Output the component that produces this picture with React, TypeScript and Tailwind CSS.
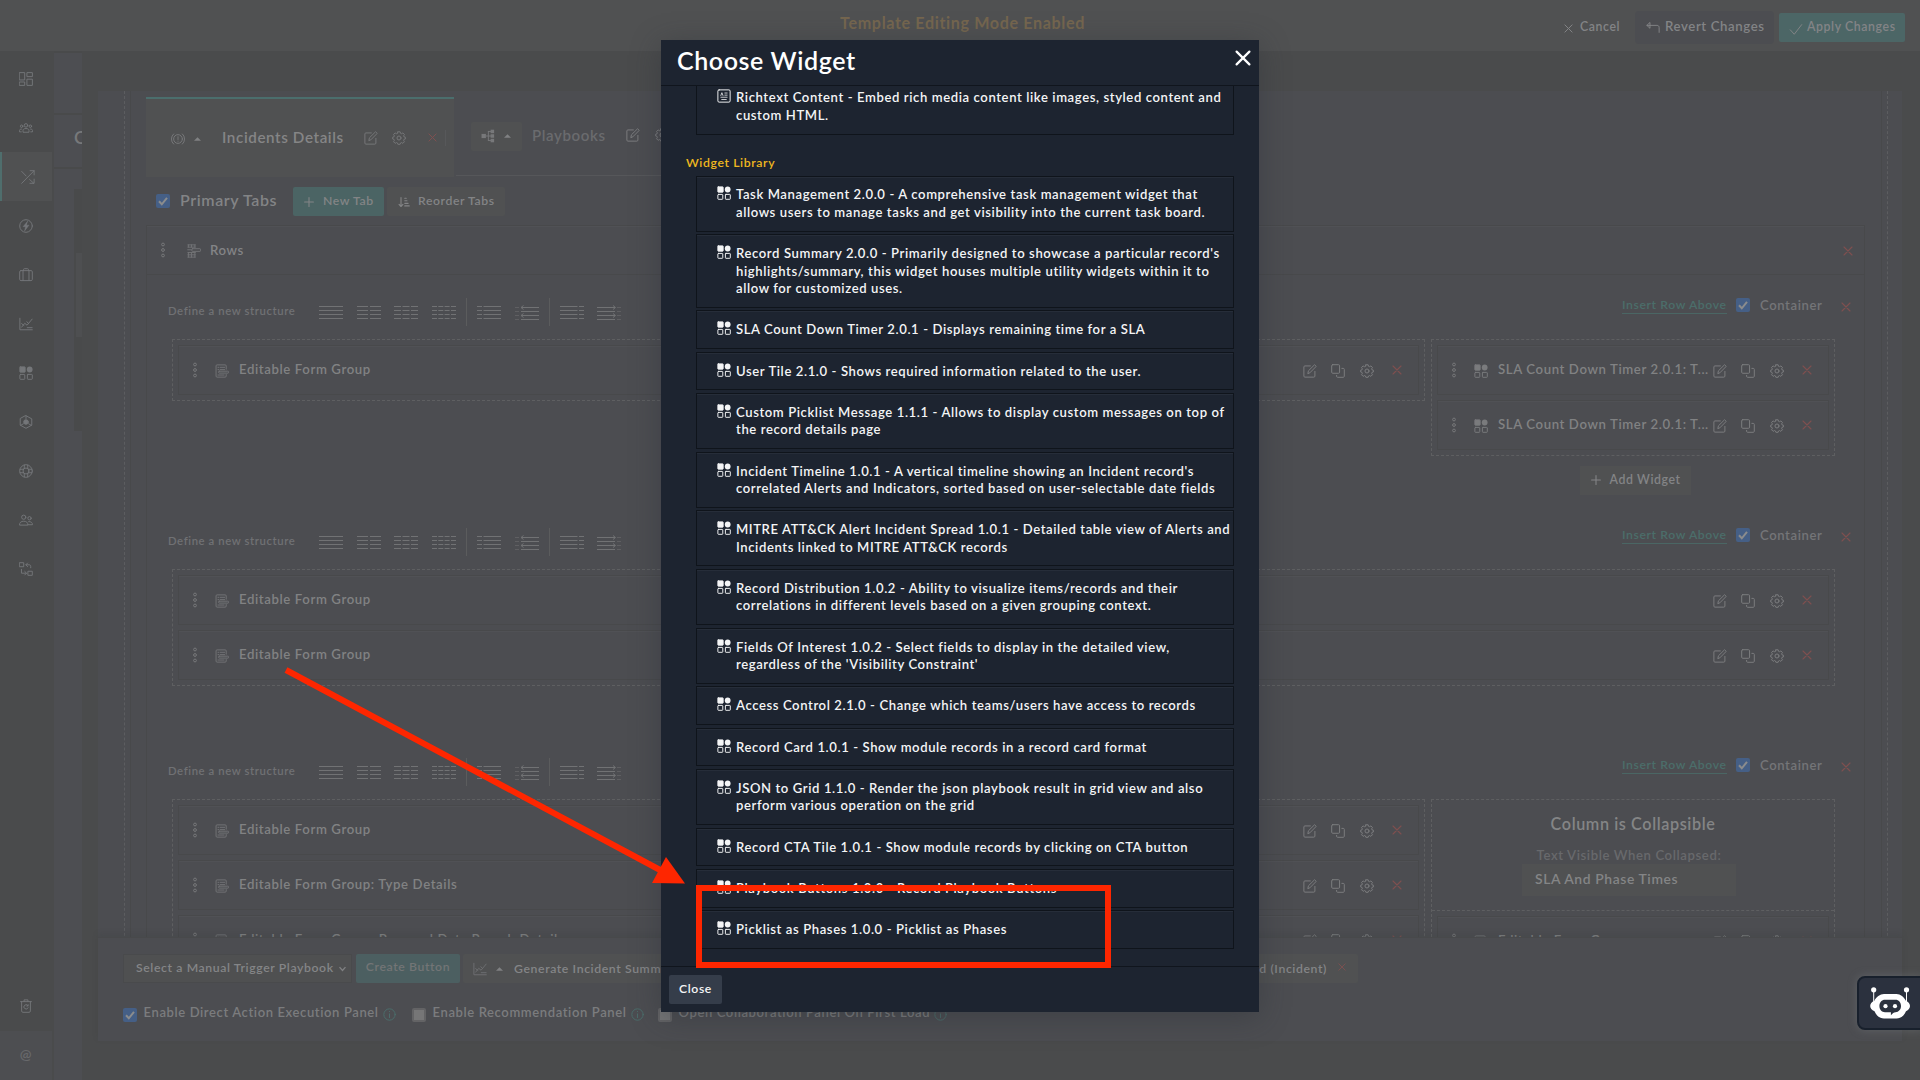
import React from 'react';
import type { ReactNode } from 'react';

type IconProps = { className?: string };

/* ---------- icons ---------- */

function Svg({ className = '', children, box = 16 }: { className?: string; children: ReactNode; box?: number }) {
  return (
    <svg
      viewBox={`0 0 ${box} ${box}`}
      className={`shrink-0 ${className}`}
      fill="none"
      stroke="currentColor"
      strokeWidth={1.1}
      strokeLinecap="round"
      strokeLinejoin="round"
    >
      {children}
    </svg>
  );
}

const WidgetIcon = ({ className }: IconProps) => (
  <Svg className={className}>
    <rect x="1" y="1" width="6" height="6" rx=".4" fill="currentColor" />
    <circle cx="12.2" cy="4" r="3.3" fill="currentColor" stroke="none" />
    <rect x="1" y="9.6" width="5.6" height="5.6" rx=".6" />
    <rect x="9.6" y="9.6" width="5.6" height="5.6" rx=".6" />
  </Svg>
);
const DashboardIcon = ({ className }: IconProps) => (
  <Svg className={className}>
    <rect x=".7" y=".7" width="5.8" height="8.4" />
    <rect x="9.5" y=".7" width="5.8" height="4.6" />
    <rect x=".7" y="11.4" width="5.8" height="3.9" />
    <rect x="9.5" y="8.2" width="5.8" height="7.1" />
  </Svg>
);
const TeamIcon = ({ className }: IconProps) => (
  <Svg className={className}>
    <circle cx="8" cy="5" r="2" />
    <path d="M4.6 12.4v-1.6c0-1.4 1.2-2.2 3.4-2.2s3.4.8 3.4 2.2v1.6z" />
    <circle cx="3" cy="6" r="1.4" />
    <circle cx="13" cy="6" r="1.4" />
    <path d="M2.6 12.4H.6v-1.6c0-1 .8-1.6 2.2-1.6M13.4 12.4h2v-1.6c0-1-.8-1.6-2.2-1.6" />
  </Svg>
);
const ShuffleIcon = ({ className }: IconProps) => (
  <Svg className={className}>
    <path d="M.8 15.2 15 .8M10.4.8H15v4.8M.8 1.6l5 5.2M9.8 10.8l4.8 4.4M15 10.4v4.8h-4.8" />
  </Svg>
);
const BoltIcon = ({ className }: IconProps) => (
  <Svg className={className}>
    <circle cx="8" cy="8" r="7.2" />
    <path d="M9.8 2.6 4.6 8.8h2.8l-1 4.8 5-6.6H8.6z" fill="currentColor" strokeWidth={0.5} />
  </Svg>
);
const CaseIcon = ({ className }: IconProps) => (
  <Svg className={className}>
    <rect x=".8" y="3" width="14.4" height="11.4" rx="1.4" />
    <path d="M5.2 3V1.8C5.2 1 5.6.8 6.2.8h3.6c.6 0 1 .2 1 1V3M4.6 3v11.4M11.4 3v11.4" />
  </Svg>
);
const ChartIcon = ({ className }: IconProps) => (
  <Svg className={className}>
    <path d="M1 1.4V14.6h14.2M3 11.6l3.6-4.4 2.6 2.2 5.8-7M3 7.6l2.6 2M9 5.4l1.6 1.8M9.4 12.2h5.6" />
  </Svg>
);
const HexIcon = ({ className }: IconProps) => (
  <Svg className={className}>
    <path d="M8 .8l6.6 3.6v7.2L8 15.2l-6.6-3.6V4.4zM8 4V1M5 10l-3 1.8M11 10l3 1.8" />
    <circle cx="8" cy="8" r="2.6" fill="currentColor" />
  </Svg>
);
const WheelIcon = ({ className }: IconProps) => (
  <Svg className={className}>
    <circle cx="8" cy="8" r="7.2" />
    <circle cx="8" cy="8" r="3.4" />
    <path d="M6 1.2v4M10 1.2v4M6 10.8v4M10 10.8v4M1.2 6h4M1.2 10h4M10.8 6h4M10.8 10h4" />
  </Svg>
);
const PeopleIcon = ({ className }: IconProps) => (
  <Svg className={className}>
    <circle cx="5.4" cy="4.8" r="2.4" />
    <circle cx="12" cy="6" r="1.9" />
    <path d="M.6 13.4c0-2.6 1.8-4 4.8-4s4.8 1.4 4.8 4zM11 9.8c2.8-.2 4.4 1.2 4.4 3.6h-5" />
  </Svg>
);
const FlowIcon = ({ className }: IconProps) => (
  <Svg className={className}>
    <rect x=".8" y=".8" width="4.6" height="4.6" />
    <rect x="10.6" y="10.6" width="4.6" height="4.6" />
    <path d="M8 3.2h3.4c1.4 0 2 .6 2 2v1.4M9.8 1.2 7.8 3.2l2 2M2.8 8.4v4.4h5.6M6.6 10.8l2 2-2 2" />
  </Svg>
);
const TrashIcon = ({ className }: IconProps) => (
  <Svg className={className}>
    <path d="M1.8 3h12.4M5.8 3V1h4.4v2M3 3v10.6c0 1 .5 1.6 1.4 1.6h7.2c.9 0 1.4-.6 1.4-1.6V3M10.2 7.6A2.5 2.5 0 1 0 10.4 10M10.4 6.4v1.6H8.8" />
  </Svg>
);
const EditIcon = ({ className }: IconProps) => (
  <Svg className={className}>
    <path d="M8.4 2.2H2.2c-.8 0-1.2.4-1.2 1.2v10.4c0 .8.4 1.2 1.2 1.2h10.2c.8 0 1.2-.4 1.2-1.2V8.4" />
    <path d="M5.6 10.6l.6-2.8L13.2.9l1.9 1.8-7 7.1z" />
  </Svg>
);
const CopyIcon = ({ className }: IconProps) => (
  <Svg className={className}>
    <rect x=".8" y=".8" width="9" height="9.8" rx="1.2" />
    <path d="M12.4 5h1.6c.8 0 1.2.4 1.2 1.2V14c0 .8-.4 1.2-1.2 1.2H7.6c-.8 0-1.2-.4-1.2-1.2v-1" />
  </Svg>
);
const GearIcon = ({ className }: IconProps) => (
  <Svg className={className}>
    <path d="M6.7.9h2.6l.4 1.7 1.2.5 1.5-.9 1.8 1.8-.9 1.5.5 1.2 1.5.4v2l-1.5.4-.5 1.2.9 1.6-1.8 1.8-1.6-.9-1.1.5-.4 1.5H6.7l-.4-1.5-1.2-.5-1.5.9-1.8-1.8.9-1.6-.5-1.2L.8 9.1v-2l1.4-.4.5-1.2L1.8 4l1.8-1.8 1.5.9 1.2-.5z" />
    <circle cx="8" cy="8" r="2.3" />
  </Svg>
);
const CrossIcon = ({ className }: IconProps) => (
  <Svg className={className} box={10}>
    <path d="M1 1l8 8M9 1L1 9" />
  </Svg>
);
const PlusIcon = ({ className }: IconProps) => (
  <Svg className={className} box={10}>
    <path d="M5 .6v8.8M.6 5h8.8" />
  </Svg>
);
const FormIcon = ({ className }: IconProps) => (
  <Svg className={className}>
    <path d="M12.8 6V2.2c0-.8-.4-1.2-1.2-1.2H2.4C1.6 1 1.2 1.4 1.2 2.2v11.6c0 .8.4 1.2 1.2 1.2h9.2c.8 0 1.2-.4 1.2-1.2V12M3.4 3.8h1M6 3.8h5M3.4 6.4h1M6 6.4h5M3.4 12.6h7" />
    <rect x="4.2" y="8.2" width="11.2" height="2.2" rx=".6" />
  </Svg>
);
const RowsIcon = ({ className }: IconProps) => (
  <Svg className={className}>
    <path d="M1 1h8.5M1 3.6h8.5M1.6 1v2.6M5.2 1v2.6M9 1v2.6M1 9.8h8.5M1 12.4h8.5M1 15h8.5M1.6 9.8V15M5.2 9.8V15M9 9.8V15M.8 6.6h4" />
    <rect x="5.6" y="5.4" width="9.8" height="3" rx=".6" />
  </Svg>
);
const RichtextIcon = ({ className }: IconProps) => (
  <Svg className={className}>
    <rect x="1" y="1" width="14" height="14" rx="1.4" />
    <path d="M4.4 7.4l1.2-3.2 1.2 3.2M9 4.6h2.6M9 7h2.6M4.4 9.4h7.2M5.4 12h5.2" strokeWidth={0.9} />
  </Svg>
);
const AlertIcon = ({ className }: IconProps) => (
  <Svg className={className}>
    <circle cx="8" cy="8" r="5" />
    <path d="M8 5.4v3.2M8 10.4v.2M3 2.2a7.6 7.6 0 0 0 0 11.6M13 2.2a7.6 7.6 0 0 1 0 11.6" />
  </Svg>
);
const TreeIcon = ({ className }: IconProps) => (
  <Svg className={className}>
    <rect x=".6" y="5.6" width="5" height="4.8" fill="currentColor" stroke="none" />
    <rect x="11" y=".8" width="4" height="4" fill="currentColor" stroke="none" />
    <rect x="11" y="6" width="4" height="4" fill="currentColor" stroke="none" />
    <rect x="11" y="11.2" width="4" height="4" fill="currentColor" stroke="none" />
    <path d="M5.6 8H11M8.4 2.8v10.4M8.4 2.8H11M8.4 13.2H11" />
  </Svg>
);
const SortIcon = ({ className }: IconProps) => (
  <Svg className={className}>
    <path d="M4 2v12M1.4 11.2 4 14l2.6-2.8M9 3h2M9 6.4h3M9 9.8h4.5M9 13.2h6" strokeWidth={1.5} />
  </Svg>
);
const RevertIcon = ({ className }: IconProps) => (
  <Svg className={className}>
    <path d="M4.2 2 1 5l3.2 3zM1 5h11.5c1.6 0 2.5.9 2.5 2.5v5.5" />
  </Svg>
);
const CheckIcon = ({ className }: IconProps) => (
  <Svg className={className}>
    <path d="M1.5 9l4.5 5L14.5 3" />
  </Svg>
);
const InfoIcon = ({ className }: IconProps) => (
  <Svg className={className}>
    <circle cx="8" cy="8" r="7" />
    <path d="M8 7.2v4.6M8 4.2v.3" />
  </Svg>
);
const Caret = () => (
  <svg viewBox="0 0 8 4" className="h-1 w-[7px] shrink-0 fill-[#808183]">
    <path d="M0 4 4 0l4 4z" />
  </svg>
);
const Dots = () => (
  <svg viewBox="0 0 6 16" className="h-4 w-1.5 shrink-0 fill-none stroke-[#77787a]">
    <circle cx="3" cy="2.5" r="1.4" />
    <circle cx="3" cy="8" r="1.4" />
    <circle cx="3" cy="13.5" r="1.4" />
  </svg>
);

/* ---------- small controls ---------- */

function Checkbox({ on = true }: { on?: boolean }) {
  return on ? (
    <span className="flex size-3.5 shrink-0 items-center justify-center rounded-xs bg-[#455f86]">
      <svg viewBox="0 0 12 12" className="size-3 fill-none stroke-[#8b8c8d] stroke-2">
        <path d="M2 6.3l2.8 3L10 2.8" />
      </svg>
    </span>
  ) : (
    <span className="block size-3.5 shrink-0 rounded-xs border-2 border-[#636365] bg-[#767677]" />
  );
}

const structures: { lines: string[]; arrow?: 'l' | 'r'; gap: string }[] = [
  { lines: ['M0 0H24'], gap: 'ml-0' },
  { lines: ['M0 0H11M13 0H24'], gap: 'ml-3.5' },
  { lines: ['M0 0H7M8.5 0H15.5M17 0H24'], gap: 'ml-[13px]' },
  { lines: ['M0 0H5M6.3 0H11.3M12.6 0H17.6M19 0H24'], gap: 'ml-3.5' },
  { lines: ['M0 0H5M6.5 0H24'], gap: 'ml-2.5' },
  { lines: ['M6 0H24', 'M0 0H4'], arrow: 'l', gap: 'ml-3.5' },
  { lines: ['M0 0H17.5M19 0H24'], gap: 'ml-2.5' },
  { lines: ['M0 0H18', 'M20 0H24'], arrow: 'r', gap: 'ml-[13px]' },
];

function StructureBar() {
  return (
    <div className="flex items-center pt-2.5">
      <span className="mb-px w-[151px] whitespace-nowrap text-[11.3px] text-[#707174]">Define a new structure</span>
      {structures.map((s, i) => (
        <React.Fragment key={i}>
          {(i === 4 || i === 6) && <span className="ml-2.5 h-7 w-px bg-[#5b5c5d]" />}
          <svg viewBox="0 0 24 16" className={`mt-0.5 h-4 w-6 shrink-0 fill-none stroke-[#717274] ${s.gap}`}>
            {[1.5, 5.5, 9.5, 13.5].map((y) => (
              <g key={y} transform={`translate(0 ${s.arrow ? y + 1 : y})`}>
                <path d={s.lines[0]} />
                {s.lines[1] && <path d={s.lines[1]} strokeOpacity=".5" />}
              </g>
            ))}
            {s.arrow === 'l' && <path d="M8.5 .5 6 2.5l2.5 2M8.5 8.5 6 10.5l2.5 2" />}
            {s.arrow === 'r' && <path d="M16 .5l2.5 2-2.5 2M16 8.5l2.5 2-2.5 2" />}
          </svg>
        </React.Fragment>
      ))}
    </div>
  );
}

function Card({ label, widget = false }: { label: string; widget?: boolean }) {
  return (
    <div className="flex h-[49.5px] shrink-0 items-center border border-[#48494b] pl-[12.5px] pr-1.5 shadow-[inset_0_1px_0_#505155]">
      <Dots />
      <span className="ml-[17.5px] text-[#737477]">
        {widget ? <WidgetIcon className="mt-0.5 size-3.5 text-[#7a7b7d]" /> : <FormIcon className="mt-0.5 size-3.5" />}
      </span>
      <span className="ml-2.5 min-w-0 whitespace-nowrap text-[13.2px] text-[#818283]">{label}</span>
      <span className="ml-auto flex shrink-0 items-center pt-0.5 text-[#7d7e80]">
        <span className="flex w-[28.5px] justify-center"><EditIcon className="size-3.5" /></span>
        <span className="flex w-[28.5px] justify-center"><CopyIcon className="size-3.5" /></span>
        <span className="flex w-[28.5px] justify-center"><GearIcon className="size-3.5" /></span>
        <span className="mb-0.5 flex w-[31px] justify-center"><CrossIcon className="size-2.5 text-[#7f5050]" /></span>
      </span>
    </div>
  );
}

function Section({ children }: { children: ReactNode }) {
  return (
    <div className="flex h-[230px] shrink-0 flex-col">
      <div className="flex h-16 shrink-0 items-center pl-[21px] pr-[13px]">
        <StructureBar />
        <div className="ml-auto flex items-center pb-[3px]">
          <span className="mr-[9px] w-[105px] whitespace-nowrap border-b border-[#4a6664] text-[12.2px] leading-4 text-[#4b6d6a]">
            Insert Row Above
          </span>
          <Checkbox />
          <span className="ml-2.5 w-[81px] text-[13.1px] text-[#747578]">Container</span>
          <CrossIcon className="mt-1 size-2.5 text-[#7f5050]" />
        </div>
      </div>
      <div className="flex items-start gap-1.5 pl-[25px] pr-[29px]">{children}</div>
    </div>
  );
}

const dropzone = 'flex flex-col gap-[5.5px] border border-dashed border-[#5e5f61] p-[5px]';

/* ---------- page behind the dialog ---------- */

const sideIcons = [DashboardIcon, TeamIcon, ShuffleIcon, BoltIcon, CaseIcon, ChartIcon, WidgetIcon, HexIcon, WheelIcon, PeopleIcon, FlowIcon];

function Sidebar() {
  return (
    <aside className="flex w-[54px] shrink-0 flex-col bg-[#4a4b4c] pt-[3px] text-[#747679]">
      {sideIcons.map((Icon, i) => (
        <div
          key={i}
          className={
            i === 2
              ? 'flex h-[49px] w-[52px] items-center justify-center border-l-2 border-[#4f6e6d] bg-[#505152] pl-0.5'
              : 'flex h-[49px] w-[52px] items-center justify-center'
          }
        >
          <Icon className="size-3.5" />
        </div>
      ))}
      <div className="mt-auto flex h-[49px] w-[52px] items-center justify-center pb-0.5"><TrashIcon className="size-3.5" /></div>
      <div className="flex h-[49px] w-[52px] items-center justify-center bg-[#4d4e51] pb-1 text-sm text-[#68696b]">@</div>
    </aside>
  );
}

function RecordColumn() {
  return (
    <div className="flex w-7 shrink-0 flex-col gap-0.5 overflow-hidden bg-[#494a4b] pt-0.5">
      <div className="h-[60px] bg-[#4d4e52]" />
      <div className="h-[52px] bg-[#4d4e52] pl-5 pt-2 text-lg text-[#77787a]">C</div>
      <div className="flex flex-1 justify-end bg-[#4d4e52] pt-5">
        <div className="h-[242px] w-2 bg-[#494a4b] pl-0.5 pt-16">
          <div className="h-[84px] bg-[#4e4f51]" />
        </div>
      </div>
    </div>
  );
}

function TopBar() {
  return (
    <header className="flex h-[51px] shrink-0 items-center justify-end bg-[#505152] pb-[7px] pr-[15px] text-[12.3px] text-[#838486]">
      <span className="mr-[479px] mt-[3px] whitespace-nowrap text-[16.2px] font-bold text-[#75664f]">Template Editing Mode Enabled</span>
      <CrossIcon className="mr-[7px] mt-[13px] size-[9px]" />
      <span className="mt-[11px] w-[55px]">Cancel</span>
      <span className="mt-[11px] flex h-[33px] w-[139px] items-center rounded-sm bg-[#4c4d51] pb-px pl-[11px] text-[13.2px]">
        <RevertIcon className="mr-[5px] mt-0.5 size-3.5" />
        <span className="whitespace-nowrap">Revert Changes</span>
      </span>
      <span className="ml-[5px] mt-[11px] flex h-[29px] w-[126px] items-center rounded-xs bg-[#4c6666] pl-2.5">
        <CheckIcon className="mr-1 mt-0.5 size-3.5" />
        <span className="whitespace-nowrap">Apply Changes</span>
      </span>
    </header>
  );
}

function TabStrip() {
  return (
    <div className="flex h-20 shrink-0">
      <div className="flex w-[308px] items-center border-t-2 border-[#4b6e6d] bg-[#505152] pb-px pl-[25px] text-[#77787a]">
        <AlertIcon className="mt-0.5 size-3.5" />
        <span className="ml-[9px] mr-[21px] mt-0.5"><Caret /></span>
        <span className="w-[142px] whitespace-nowrap text-[15.2px] text-[#858586]">Incidents Details</span>
        <EditIcon className="size-3.5" />
        <GearIcon className="ml-3.5 size-3.5" />
        <CrossIcon className="ml-[22px] size-[9px] text-[#7f5050]" />
        <span className="ml-2 h-4 w-px bg-[#57585a]" />
      </div>
      <div className="ml-0.5 flex h-[79px] w-[780px] items-center border-b border-[#56575a] pl-[15px]">
        <span className="flex h-[29px] w-[51px] items-center rounded-xs bg-[#505152] pl-2.5 text-[#77787a]">
          <TreeIcon className="mr-[9px] size-3.5" />
          <Caret />
        </span>
        <span className="mb-0.5 ml-2.5 w-[94px] text-[15.1px] text-[#6a6b6e]">Playbooks</span>
        <EditIcon className="mb-0.5 size-3.5 text-[#7d7e80]" />
        <GearIcon className="mb-0.5 ml-[15px] size-3.5 text-[#7d7e80]" />
      </div>
    </div>
  );
}

function Toolbar() {
  return (
    <div className="flex h-12 shrink-0 items-center pl-2.5 text-[12.2px] text-[#838486]">
      <Checkbox />
      <span className="mb-[3px] ml-2.5 w-[113px] whitespace-nowrap text-base leading-none">Primary Tabs</span>
      <span className="flex h-[29px] w-[91px] items-center rounded-xs bg-[#4b6464] pl-[11px]">
        <PlusIcon className="mr-[9px] mt-px size-2.5" />
        <span className="whitespace-nowrap">New Tab</span>
      </span>
      <span className="ml-[3px] flex h-[29px] w-[118px] items-center rounded-xs bg-[#505152] pl-[11px]">
        <SortIcon className="mr-2 mt-px size-3" />
        <span className="whitespace-nowrap">Reorder Tabs</span>
      </span>
    </div>
  );
}

function Canvas() {
  return (
    <div className="h-[846px] shrink-0 overflow-hidden bg-[#4c4d51] pl-[26px]">
      <div className="w-[1764px] border-x border-dashed border-[#5c5d60] px-[5px]">
        <div className="flex h-[900px] w-[1752px] flex-col border-x border-[#48494b] pl-[15px] pr-4 pt-1.5">
          <TabStrip />
          <Toolbar />
          <div className="flex flex-1 flex-col border border-b-0 border-[#48494b] shadow-[inset_0_1px_0_#505155]">
            <div className="flex h-[49px] shrink-0 items-center border-b border-[#48494b] pl-[13px] pr-[11px]">
              <Dots />
              <RowsIcon className="ml-[21px] mt-0.5 size-3.5 text-[#737477]" />
              <span className="ml-[9px] mt-px text-[13.2px] text-[#838486]">Rows</span>
              <CrossIcon className="ml-auto mt-0.5 size-2.5 text-[#7f5050]" />
            </div>
            <Section>
              <div className={`${dropzone} w-[1253px] shrink-0`}><Card label="Editable Form Group" /></div>
              <div className="flex min-w-0 flex-1 flex-col items-center">
                <div className={`${dropzone} w-full`}>
                  <Card widget label="SLA Count Down Timer 2.0.1: T..." />
                  <Card widget label="SLA Count Down Timer 2.0.1: T..." />
                </div>
                <span className="ml-1 mt-2.5 flex h-[29px] w-[111px] items-center bg-[#505152] pl-[11px] text-[12.3px] text-[#838486]">
                  <PlusIcon className="mr-[9px] size-2.5" />
                  <span className="whitespace-nowrap">Add Widget</span>
                </span>
              </div>
            </Section>
            <Section>
              <div className={`${dropzone} flex-1`}>
                <Card label="Editable Form Group" />
                <Card label="Editable Form Group" />
              </div>
            </Section>
            <Section>
              <div className={`${dropzone} w-[1253px] shrink-0`}>
                <Card label="Editable Form Group" />
                <Card label="Editable Form Group: Type Details" />
                <Card label="Editable Form Group: Personal Data Breach Details" />
              </div>
              <div className="flex min-w-0 flex-1 flex-col border border-dashed border-[#5e5f61]">
                <div className="flex h-[111px] flex-col items-center border-b border-dashed border-[#5e5f61] pt-3.5">
                  <span className="whitespace-nowrap text-[16.2px] leading-5 text-[#848586]">Column is Collapsible</span>
                  <span className="mr-2 mt-3 whitespace-nowrap text-[13.15px] leading-[18px] text-[#68696c]">Text Visible When Collapsed:</span>
                  <span className="mr-2 flex h-8 w-[214px] items-center bg-[#505152] pb-px pl-[13px] text-[13.9px] text-[#848586]">SLA And Phase Times</span>
                </div>
                <div className="p-[5px]"><Card label="Editable Form Group" /></div>
              </div>
            </Section>
          </div>
        </div>
      </div>
    </div>
  );
}

function OptionRow({ label, on, width }: { label: string; on: boolean; width: string }) {
  return (
    <span className={`flex shrink-0 items-center ${width}`}>
      <span className="pt-1"><Checkbox on={on} /></span>
      <span className="ml-[6.5px] whitespace-nowrap text-[13.05px] text-[#7b7c7e]">{label}</span>
      <InfoIcon className="ml-1 mt-0.5 size-[13px] text-[#4b706e]" />
    </span>
  );
}

function BottomPanel() {
  return (
    <div className="h-[104px] shrink-0 border-t border-[#48494b] bg-[#4c4d51] pl-[25px] pt-4 text-[12.25px] text-[#848587] shadow-[0_-3px_5px_rgba(60,62,64,.25)]">
      <div className="flex h-[29px]">
        <span className="flex w-[229px] items-center border border-[#494a4c] bg-[#4f5051] pl-3">
          <span className="w-[203px] whitespace-nowrap">Select a Manual Trigger Playbook</span>
          <svg viewBox="0 0 8 6" className="mt-px h-1.5 w-[7px] fill-none stroke-[#808183] stroke-[1.5]"><path d="M.6.8 4 4.6 7.4.8" /></svg>
        </span>
        <span className="ml-1 flex w-[104px] items-center justify-center rounded-xs bg-[#4c5f61] pb-0.5 text-[#737576]">Create Button</span>
        <span className="ml-[3px] flex w-[895px] items-center rounded-xs bg-[#505152] pl-2.5">
          <ChartIcon className="size-3.5 text-[#6d6e71]" />
          <span className="ml-[9px] mr-[11px]"><Caret /></span>
          <span className="mt-0.5 whitespace-nowrap">Generate Incident Summary</span>
          <span className="ml-auto mt-0.5 whitespace-nowrap">Investigate Record (Incident)</span>
          <CrossIcon className="mb-1 ml-[11px] mr-3 size-2 text-[#7f5050]" />
        </span>
      </div>
      <div className="mt-[18px] flex h-6 items-center">
        <OptionRow on label="Enable Direct Action Execution Panel" width="w-[289px]" />
        <OptionRow on={false} label="Enable Recommendation Panel" width="w-[246px]" />
        <OptionRow on={false} label="Open Collaboration Panel On First Load" width="w-[300px]" />
      </div>
    </div>
  );
}

/* ---------- dialog ---------- */

const widgets: string[][] = [
  ['Task Management 2.0.0 - A comprehensive task management widget that', 'allows users to manage tasks and get visibility into the current task board.'],
  ["Record Summary 2.0.0 - Primarily designed to showcase a particular record's", 'highlights/summary, this widget houses multiple utility widgets within it to', 'allow for customized uses.'],
  ['SLA Count Down Timer 2.0.1 - Displays remaining time for a SLA'],
  ['User Tile 2.1.0 - Shows required information related to the user.'],
  ['Custom Picklist Message 1.1.1 - Allows to display custom messages on top of', 'the record details page'],
  ["Incident Timeline 1.0.1 - A vertical timeline showing an Incident record's", 'correlated Alerts and Indicators, sorted based on user-selectable date fields'],
  ['MITRE ATT&CK Alert Incident Spread 1.0.1 - Detailed table view of Alerts and', 'Incidents linked to MITRE ATT&CK records'],
  ['Record Distribution 1.0.2 - Ability to visualize items/records and their', 'correlations in different levels based on a given grouping context.'],
  ['Fields Of Interest 1.0.2 - Select fields to display in the detailed view,', "regardless of the 'Visibility Constraint'"],
  ['Access Control 2.1.0 - Change which teams/users have access to records'],
  ['Record Card 1.0.1 - Show module records in a record card format'],
  ['JSON to Grid 1.1.0 - Render the json playbook result in grid view and also', 'perform various operation on the grid'],
  ['Record CTA Tile 1.0.1 - Show module records by clicking on CTA button'],
  ['Playbook Buttons 1.0.0 - Record Playbook Buttons'],
  ['Picklist as Phases 1.0.0 - Picklist as Phases'],
];

function Lines({ lines }: { lines: string[] }) {
  return (
    <span className="ml-[5px] whitespace-nowrap pt-px">
      {lines.map((l) => (
        <span key={l} className="block">{l}</span>
      ))}
    </span>
  );
}

function Dialog() {
  return (
    <div className="absolute left-[661px] top-10 flex h-[972px] w-[598px] flex-col bg-[#1d2430] text-[#f4f5f6] shadow-[0_5px_28px_rgba(40,44,52,.4)]">
      <div className="flex h-[46px] shrink-0 items-center justify-between border-b border-[#10151d] pb-1 pl-4 pr-2">
        <h2 className="text-[25px] text-white">Choose Widget</h2>
        <CrossIcon className="mb-1.5 size-4 stroke-[1.4] text-white" />
      </div>
      <div className="flex flex-1 flex-col overflow-hidden pl-[35px] pr-[25.5px] text-[13.09px] leading-[17.4px]">
        <div className="flex h-[48.5px] shrink-0 border border-t-0 border-[#0f141b] pl-5 pt-[2.2px]">
          <RichtextIcon className="mt-px size-3.5" />
          <Lines lines={['Richtext Content - Embed rich media content like images, styled content and', 'custom HTML.']} />
        </div>
        <h3 className="-ml-2.5 mb-[4.7px] mt-[19px] text-[12.25px] text-[#efb81f]">Widget Library</h3>
        <div className="flex flex-col gap-[2.6px]">
          {widgets.map((lines) => (
            <div
              key={lines[0]}
              className="flex items-start border border-[#0f141b] pb-[9.4px] pl-5 pt-[8.9px] shadow-[inset_0_1px_0_#262d39]"
            >
              <WidgetIcon className="mt-px size-3.5" />
              <Lines lines={lines} />
            </div>
          ))}
        </div>
      </div>
      <div className="flex h-[46px] shrink-0 items-center border-t border-[#10151d] pl-2">
        <button className="h-[29px] w-[53px] rounded-xs bg-[#353d4a] text-[12.2px]">Close</button>
      </div>
    </div>
  );
}

function ChatBot() {
  return (
    <div className="absolute left-[1857px] top-[976px] h-[54px] w-[66px] rounded-l-lg border-2 border-[#18202c] bg-[#2b313e] shadow-[0_0_10px_rgba(120,124,128,.45)]">
      <svg viewBox="0 0 40 32" className="ml-[11px] mt-[9px] h-8 w-10 fill-white">
        <circle cx="3.7" cy="2.8" r="2.6" />
        <circle cx="36.5" cy="2.8" r="2.6" />
        <path d="M3.2 4h1v11h-1zM36 4h1v11h-1z" />
        <path d="M14 7h12.5c4 0 7.5 3 9.5 7 2.5.8 4 2.8 4 5s-1.5 4.3-4 5.2c-1.8 4.3-5 7.3-9.500 7.300H14c-4.500 0-7.700-3-9.500-7.300C1.700 23.300.2 21.200.2 19s1.500-4.200 4-5c2-4 5.800-7 9.800-7z" />
        <path
          className="fill-[#2b313e]"
          d="M15 12.800h10.500c3.200 0 5.500 2.700 5.500 6.200s-2.300 6-5.500 6.200c-1.800 0-2.800 1-4.600 3v-3H15c-3.200 0-5.600-2.700-5.600-6.200s2.400-6.200 5.600-6.200z"
        />
        <circle cx="15.500" cy="19.200" r="2.100" />
        <circle cx="25" cy="19.200" r="2.100" />
      </svg>
    </div>
  );
}

function Callout() {
  return (
    <>
      <svg viewBox="0 0 1920 1080" className="pointer-events-none absolute inset-0 h-full w-full">
        <path d="M286 670 662 871" className="stroke-[#fe2600] stroke-[6]" />
        <path d="M666 857 685 883.5 652 883z" className="fill-[#fe2600]" />
      </svg>
      <div className="absolute left-[696px] top-[885px] h-[83px] w-[415px] border-[6px] border-[#fe2600]" />
    </>
  );
}

export default function App() {
  return (
    <div className="relative flex h-[1080px] w-[1920px] flex-col overflow-hidden bg-[#4a4b4c] font-['Lato',sans-serif] font-semibold tracking-[0.6px]">
      <TopBar />
      <div className="flex flex-1">
        <Sidebar />
        <RecordColumn />
        <main className="flex w-[1820px] flex-col pl-4 pt-10">
          <Canvas />
          <BottomPanel />
        </main>
      </div>
      <Dialog />
      <ChatBot />
      <Callout />
    </div>
  );
}
